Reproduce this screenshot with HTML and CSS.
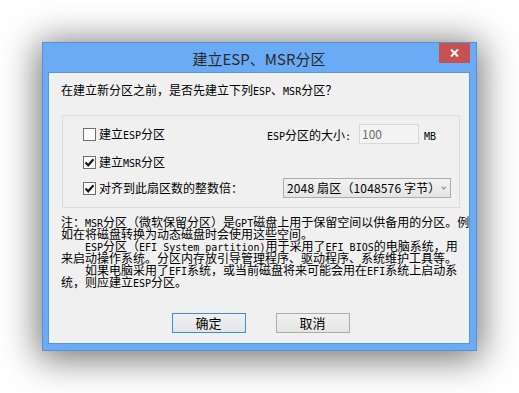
FILE: index.html
```html
<!DOCTYPE html>
<html lang="zh-CN">
<head>
<meta charset="utf-8">
<title>建立ESP、MSR分区</title>
<link rel="stylesheet" href="styles.css">
</head>
<body>
<div class="stage">
  <div class="window">
    <div class="titlebar">
      <div class="title">建立ESP、MSR分区</div>
      <div class="close">
        <svg width="9" height="8" viewBox="0 0 9 8"><path d="M1 0.5 L8 7.5 M8 0.5 L1 7.5" stroke="#fff" stroke-width="2" fill="none"/></svg>
      </div>
    </div>
    <div class="client">
      <p class="question">在建立新分区之前，是否先建立下列<span class="m">ESP</span>、<span class="m">MSR</span>分区？</p>
      <div class="group">
        <div class="row">
          <div class="check"><span class="box"></span><span>建立<span class="m">ESP</span>分区</span></div>
          <div class="size">
            <span class="size-label"><span class="m">ESP</span>分区的大小<span class="m">:</span></span>
            <span class="input">100</span>
            <span class="unit"><span class="m">MB</span></span>
          </div>
        </div>
        <div class="row row2">
          <div class="check"><span class="box"><svg width="11" height="11" viewBox="0 0 11 11"><path d="M1.5 5.5 L4.2 8.3 L9.5 2.2" stroke="#1a1a1a" stroke-width="2.2" fill="none"/></svg></span><span>建立<span class="m">MSR</span>分区</span></div>
        </div>
        <div class="row row3">
          <div class="check"><span class="box"><svg width="11" height="11" viewBox="0 0 11 11"><path d="M1.5 5.5 L4.2 8.3 L9.5 2.2" stroke="#1a1a1a" stroke-width="2.2" fill="none"/></svg></span><span>对齐到此扇区数的整数倍：</span></div>
          <div class="select">
            <span class="select-text">2048 扇区（1048576 字节）</span>
            <svg class="chev" width="8" height="6" viewBox="0 0 8 6"><path d="M1 1 L4 4.5 L7 1" stroke="#8a8f99" stroke-width="1.6" fill="none"/></svg>
          </div>
        </div>
      </div>
      <div class="notes">
        <div>注：<span class="m">MSR</span>分区（微软保留分区）是<span class="m">GPT</span>磁盘上用于保留空间以供备用的分区。例</div>
        <div>如在将磁盘转换为动态磁盘时会使用这些空间。</div>
        <div class="indent"><span class="m">ESP</span>分区（<span class="m">EFI System partition)</span>用于采用了<span class="m">EFI BIOS</span>的电脑系统，用</div>
        <div>来启动操作系统。分区内存放引导管理程序、驱动程序、系统维护工具等。</div>
        <div class="indent">如果电脑采用了<span class="m">EFI</span>系统，或当前磁盘将来可能会用在<span class="m">EFI</span>系统上启动系</div>
        <div>统，则应建立<span class="m">ESP</span>分区。</div>
      </div>
      <div class="buttons">
        <div class="btn btn-default">确定</div>
        <div class="btn">取消</div>
      </div>
    </div>
  </div>
</div>
</body>
</html>
```

FILE: styles.css
```css
html, body {
  margin: 0;
  padding: 0;
  background: #ffffff;
}

body {
  width: 519px;
  height: 393px;
  overflow: hidden;
  font-family: "Noto Sans CJK SC", "Noto Sans", sans-serif;
}

.stage {
  padding: 42px 0 0 42px;
}

.window {
  box-sizing: border-box;
  width: 435px;
  height: 309px;
  border: 1px solid #5a8fd4;
  background: #6aabf6;
  padding: 0 6px 6px 5px;
  box-shadow: 0 4px 34px 4px rgba(0, 0, 0, 0.55);
}

.titlebar {
  position: relative;
  height: 29px;
}

.title {
  text-align: center;
  font-size: 15px;
  line-height: 29px;
  color: #2a2a2a;
  padding-top: 1px;
}

.close {
  position: absolute;
  top: 0;
  right: 0;
  width: 31px;
  height: 20px;
  background: #c75050;
  display: flex;
  align-items: center;
  justify-content: center;
}

.client {
  box-sizing: border-box;
  height: 272px;
  border: 1px solid #5b94de;
  background: #f0f0f0;
  font-size: 12px;
  color: #000;
}

.m {
  font-family: "DejaVu Sans Mono", "Liberation Mono", monospace;
  font-size: 10px;
  line-height: 8px;
}

.question {
  margin: 10px 0 0 12px;
  line-height: 14px;
  height: 14px;
  white-space: nowrap;
}

.group {
  box-sizing: border-box;
  width: 398px;
  height: 93px;
  margin: 18px 0 0 13px;
  border: 1px solid #dcdcdc;
  padding: 8px 8px 9px 20px;
}

.row {
  display: flex;
  align-items: center;
  height: 20px;
}

.row2 { margin-top: 8px; }
.row3 { margin-top: 6px; justify-content: space-between; }

.check {
  display: flex;
  align-items: center;
  white-space: nowrap;
  line-height: 14px;
}

.box {
  box-sizing: border-box;
  width: 13px;
  height: 13px;
  border: 1px solid #707070;
  background: #ffffff;
  margin-right: 3px;
  display: flex;
  align-items: center;
  justify-content: center;
}

.box svg { display: block; }

.size {
  margin-left: auto;
  display: flex;
  align-items: center;
}

.size-label {
  width: 92px;
  white-space: nowrap;
}

.input {
  box-sizing: border-box;
  width: 60px;
  height: 20px;
  border: 1px solid #d9d9d9;
  background: #f3f3f3;
  color: #6d6d6d;
  padding: 0 0 0 2px;
  line-height: 17px;
}

.unit {
  width: 27px;
  margin-left: 5px;
}

.select {
  box-sizing: border-box;
  width: 168px;
  height: 20px;
  border: 1px solid #acacac;
  background: linear-gradient(#f2f2f2, #e5e5e5);
  display: flex;
  align-items: center;
  padding: 0 4px 0 3px;
}

.select-text {
  flex: 1;
  white-space: nowrap;
  line-height: 18px;
  letter-spacing: 0.15px;
}

.chev { display: block; }

.notes {
  margin: 8px 0 0 12px;
  line-height: 12px;
  white-space: nowrap;
}

.notes > div {
  height: 12px;
}

.indent { padding-left: 24px; }

.buttons {
  display: flex;
  justify-content: center;
  gap: 30px;
  margin-top: 25px;
  padding-left: 3px;
}

.btn {
  box-sizing: border-box;
  width: 74px;
  height: 20px;
  border: 1px solid #acacac;
  background: linear-gradient(#f0f0f0, #e5e5e5);
  text-align: center;
  line-height: 17px;
  font-size: 13px;
}

.btn-default {
  border-color: #3c8ee0;
}
```
